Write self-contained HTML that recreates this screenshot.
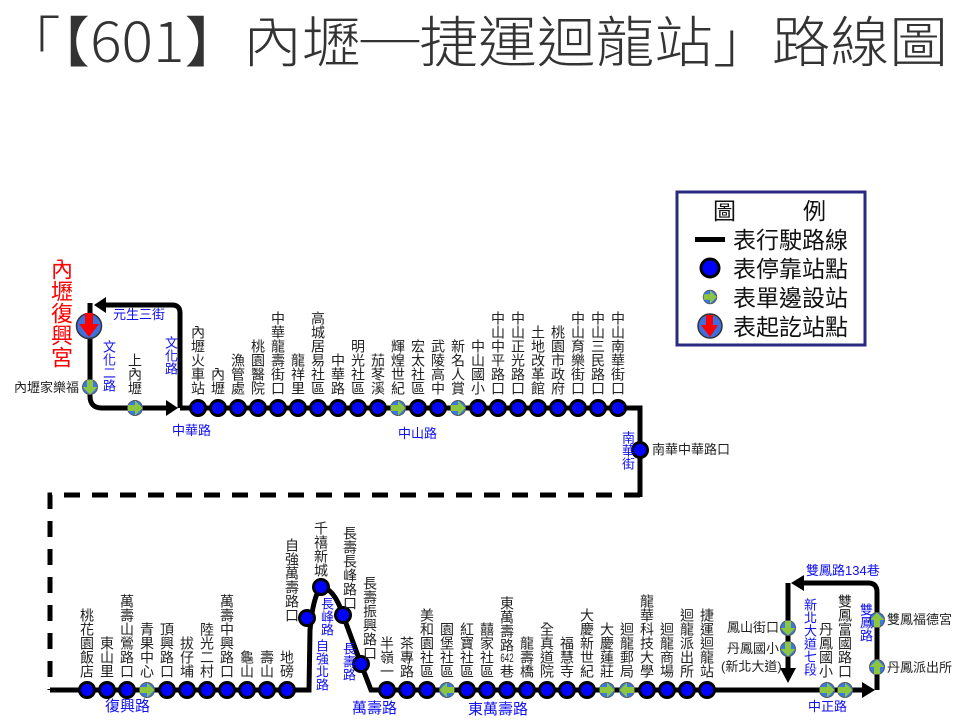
<!DOCTYPE html>
<html><head><meta charset="utf-8"><style>
html,body{margin:0;padding:0;background:#fff;}
#w{position:relative;width:960px;height:720px;overflow:hidden;font-family:"Liberation Sans","Noto Sans CJK TC",sans-serif;}
svg{position:absolute;left:0;top:0;}
.v{position:absolute;writing-mode:vertical-rl;text-orientation:upright;font-size:14px;line-height:16px;width:16px;color:#222;letter-spacing:0;white-space:nowrap;}
.b{color:#1010f0;font-size:13px;}
.h{position:absolute;font-size:13px;color:#222;white-space:nowrap;line-height:14px;}
.hb{position:absolute;font-size:13px;color:#1010f0;white-space:nowrap;line-height:14px;}
.tc{text-combine-upright:all;font-size:12px;}
</style></head><body><div id="w">
<svg width="960" height="720" viewBox="0 0 960 720">
<defs>
<g id="g"><circle r="7.5" fill="#3a78e6" stroke="#555" stroke-width="1"/><polygon points="-7,-3 0,-3 0,-7.5 7.5,0 0,7.5 0,3 -7,3" fill="#8cc63f"/></g>
<g id="s"><circle r="7.5" fill="#0000ff" stroke="#000" stroke-width="3"/></g>
</defs>
<text x="2" y="62" font-family="Noto Sans CJK TC, sans-serif" font-weight="300" font-size="55" fill="#333" textLength="946" lengthAdjust="spacingAndGlyphs">「【601】內壢─捷運迴龍站」路線圖</text>
<g fill="none" stroke="#000" stroke-width="5">
<path d="M90,303 L90,396 Q90,408 102,408 L168,408"/>
<path d="M180,408 L180,313 Q180,305 172,305 L104,305"/>
<path d="M180,408 L640,408 L640,497"/>
<path d="M640,495 L50,495 L50,690" stroke-dasharray="16 12"/>
<path d="M50,690 L309,690 L310,630 Q313,596 321,587 Q334,588 343,615 L361,664 L371,690 L864,690"/>
<path d="M877,690 L877,592 Q877,583 868,583 L802,583"/>
<path d="M788,583 L788,670"/>
</g>
<polygon points="166,400 178,408 166,416" fill="#000"/>
<polygon points="106,297 94,305 106,313" fill="#000"/>
<polygon points="862,682 875,690 862,698" fill="#000"/>
<polygon points="804,575 791,583 804,591" fill="#000"/>
<polygon points="780,668 788,683 796,668" fill="#000"/>
<g>
<use href="#s" x="198" y="408"/><use href="#s" x="218" y="408"/><use href="#s" x="238" y="408"/><use href="#s" x="258" y="408"/><use href="#s" x="278" y="408"/><use href="#s" x="298" y="408"/><use href="#s" x="318" y="408"/><use href="#s" x="338" y="408"/><use href="#s" x="358" y="408"/><use href="#s" x="378" y="408"/><use href="#g" x="398" y="408"/><use href="#s" x="418" y="408"/><use href="#s" x="438" y="408"/><use href="#g" x="458" y="408"/><use href="#s" x="478" y="408"/><use href="#s" x="498" y="408"/><use href="#s" x="518" y="408"/><use href="#s" x="538" y="408"/><use href="#s" x="558" y="408"/><use href="#s" x="578" y="408"/><use href="#s" x="598" y="408"/><use href="#s" x="618" y="408"/>
<use href="#s" x="640" y="450"/>
<use href="#g" x="135" y="408"/>
<use href="#g" transform="translate(90,387) rotate(90)"/>
<use href="#s" x="87" y="690"/><use href="#s" x="107" y="690"/><use href="#s" x="127" y="690"/><use href="#g" x="147" y="690"/><use href="#s" x="167" y="690"/><use href="#s" x="187" y="690"/><use href="#s" x="207" y="690"/><use href="#s" x="227" y="690"/><use href="#s" x="247" y="690"/><use href="#s" x="267" y="690"/><use href="#s" x="287" y="690"/>
<use href="#s" x="307" y="618"/><use href="#s" x="321" y="587"/><use href="#s" x="343" y="615"/><use href="#s" x="361" y="664"/>
<use href="#s" x="387" y="690"/><use href="#s" x="407" y="690"/><use href="#s" x="427" y="690"/><use href="#g" transform="translate(447,690) rotate(180)"/><use href="#s" x="467" y="690"/><use href="#s" x="487" y="690"/><use href="#s" x="507" y="690"/><use href="#s" x="527" y="690"/><use href="#s" x="547" y="690"/><use href="#s" x="567" y="690"/><use href="#s" x="587" y="690"/><use href="#g" x="607" y="690"/><use href="#g" transform="translate(627,690) rotate(180)"/><use href="#s" x="647" y="690"/><use href="#s" x="667" y="690"/><use href="#s" x="687" y="690"/><use href="#s" x="707" y="690"/>
<use href="#g" x="827" y="690"/><use href="#g" x="845" y="690"/>
<use href="#g" transform="translate(788,628) rotate(90)"/><use href="#g" transform="translate(788,649) rotate(90)"/>
<use href="#g" transform="translate(877,620) rotate(-90)"/><use href="#g" transform="translate(877,667) rotate(-90)"/>
</g>
<circle cx="89" cy="326" r="12.5" fill="#3d6fe0" stroke="#333" stroke-width="1.5"/>
<rect x="85" y="313" width="8" height="12" fill="#f00"/><polygon points="79,324 99,324 89,337" fill="#f00"/>
<rect x="677" y="192" width="188" height="153" fill="none" stroke="#2a2a80" stroke-width="3"/>
<rect x="695" y="237" width="30" height="5" fill="#000"/>
<circle cx="710" cy="268" r="9" fill="#0000ff" stroke="#000" stroke-width="3"/>
<g transform="translate(710,297) scale(0.9)"><use href="#g"/></g>
<circle cx="710" cy="326" r="12" fill="#3d6fe0" stroke="#333" stroke-width="1.5"/>
<rect x="706" y="315" width="7" height="11" fill="#f00"/><polygon points="701,325 718,325 710,337" fill="#f00"/>
<g font-family="Liberation Sans, Noto Sans CJK TC, sans-serif" font-size="23" fill="#111">
<text x="713" y="219">圖</text><text x="803" y="219">例</text>
<text x="733" y="248">表行駛路線</text>
<text x="733" y="277">表停靠站點</text>
<text x="733" y="306">表單邊設站</text>
<text x="733" y="335">表起訖站點</text>
</g>
</svg>
<div class="v" style="left:49px;top:258px;font-size:22px;line-height:22.5px;width:22px;color:#f00">內壢復興宮</div>
<div class="hb" style="left:113px;top:308px">元生三街</div>
<div class="v b" style="left:99px;top:340px;line-height:13px">文化二路</div>
<div class="v b" style="left:161px;top:336px;line-height:13px">文化路</div>
<div class="v" style="left:127px;bottom:325px">上內壢</div>
<div class="h" style="left:14px;top:381px">內壢家樂福</div>
<div class="hb" style="left:172px;top:424px">中華路</div>
<div class="hb" style="left:398px;top:427px">中山路</div>
<div class="v b" style="left:617px;top:431px;line-height:12px">南華街</div>
<div class="h" style="left:652px;top:443px">南華中華路口</div>

<div class="v" style="left:190px;bottom:325px">內壢火車站</div>
<div class="v" style="left:210px;bottom:325px">內壢</div>
<div class="v" style="left:230px;bottom:325px">漁管處</div>
<div class="v" style="left:250px;bottom:325px">桃園醫院</div>
<div class="v" style="left:270px;bottom:325px">中華龍壽街口</div>
<div class="v" style="left:290px;bottom:325px">龍祥里</div>
<div class="v" style="left:310px;bottom:325px">高城居易社區</div>
<div class="v" style="left:330px;bottom:325px">中華路</div>
<div class="v" style="left:350px;bottom:325px">明光社區</div>
<div class="v" style="left:370px;bottom:325px">茄苳溪</div>
<div class="v" style="left:390px;bottom:325px">輝煌世紀</div>
<div class="v" style="left:410px;bottom:325px">宏太社區</div>
<div class="v" style="left:430px;bottom:325px">武陵高中</div>
<div class="v" style="left:450px;bottom:325px">新名人賞</div>
<div class="v" style="left:470px;bottom:325px">中山國小</div>
<div class="v" style="left:490px;bottom:325px">中山中平路口</div>
<div class="v" style="left:510px;bottom:325px">中山正光路口</div>
<div class="v" style="left:530px;bottom:325px">土地改革館</div>
<div class="v" style="left:550px;bottom:325px">桃園市政府</div>
<div class="v" style="left:570px;bottom:325px">中山育樂街口</div>
<div class="v" style="left:590px;bottom:325px">中山三民路口</div>
<div class="v" style="left:610px;bottom:325px">中山南華街口</div>

<div class="v" style="left:79px;bottom:42px">桃花園飯店</div>
<div class="v" style="left:99px;bottom:42px">東山里</div>
<div class="v" style="left:119px;bottom:42px">萬壽山鶯路口</div>
<div class="v" style="left:139px;bottom:42px">青果中心</div>
<div class="v" style="left:159px;bottom:42px">頂興路口</div>
<div class="v" style="left:179px;bottom:42px">拔仔埔</div>
<div class="v" style="left:199px;bottom:42px">陸光二村</div>
<div class="v" style="left:219px;bottom:42px">萬壽中興路口</div>
<div class="v" style="left:239px;bottom:42px">龜山</div>
<div class="v" style="left:259px;bottom:42px">壽山</div>
<div class="v" style="left:279px;bottom:42px">地磅</div>
<div class="v" style="left:284px;bottom:98px">自強萬壽路口</div>
<div class="v" style="left:313px;bottom:143px">千禧新城</div>
<div class="v" style="left:342px;bottom:110px">長壽長峰路口</div>
<div class="v" style="left:362px;bottom:60px">長壽振興路口</div>
<div class="v b" style="left:316px;top:597px;line-height:12px">長峰路</div>
<div class="v b" style="left:311px;top:639px;line-height:12px">自強北路</div>
<div class="v b" style="left:338px;top:642px;line-height:12px">長壽路</div>
<div class="hb" style="left:105px;top:700px;font-size:15px">復興路</div>
<div class="hb" style="left:352px;top:702px;font-size:15px">萬壽路</div>
<div class="hb" style="left:468px;top:703px;font-size:15px">東萬壽路</div>

<div class="v" style="left:379px;bottom:42px">半嶺一</div>
<div class="v" style="left:399px;bottom:42px">茶專路</div>
<div class="v" style="left:419px;bottom:42px">美和園社區</div>
<div class="v" style="left:439px;bottom:42px">園堡社區</div>
<div class="v" style="left:459px;bottom:42px">紅寶社區</div>
<div class="v" style="left:479px;bottom:42px">囍家社區</div>
<div class="v" style="left:499px;bottom:42px">東萬壽路<span class="tc">642</span>巷</div>
<div class="v" style="left:519px;bottom:42px">龍壽橋</div>
<div class="v" style="left:539px;bottom:42px">全真道院</div>
<div class="v" style="left:559px;bottom:42px">福慧寺</div>
<div class="v" style="left:579px;bottom:42px">大慶新世紀</div>
<div class="v" style="left:599px;bottom:42px">大慶蓮莊</div>
<div class="v" style="left:619px;bottom:42px">迴龍郵局</div>
<div class="v" style="left:639px;bottom:42px">龍華科技大學</div>
<div class="v" style="left:659px;bottom:42px">迴龍商場</div>
<div class="v" style="left:679px;bottom:42px">迴龍派出所</div>
<div class="v" style="left:699px;bottom:42px">捷運迴龍站</div>

<div class="h" style="left:727px;top:621px">鳳山街口</div>
<div class="h" style="left:727px;top:642px">丹鳳國小</div>
<div class="h" style="left:721px;top:660px">(新北大道)</div>
<div class="v b" style="left:799px;top:598px;line-height:12px">新北大道七段</div>
<div class="v" style="left:818px;bottom:42px">丹鳳國小</div>
<div class="v" style="left:837px;bottom:42px">雙鳳富國路口</div>
<div class="v b" style="left:855px;top:603px;line-height:12px">雙鳳路</div>
<div class="hb" style="left:806px;top:564px">雙鳳路134巷</div>
<div class="h" style="left:887px;top:613px">雙鳳福德宮</div>
<div class="h" style="left:887px;top:661px">丹鳳派出所</div>
<div class="hb" style="left:808px;top:700px">中正路</div>
</div></body></html>
